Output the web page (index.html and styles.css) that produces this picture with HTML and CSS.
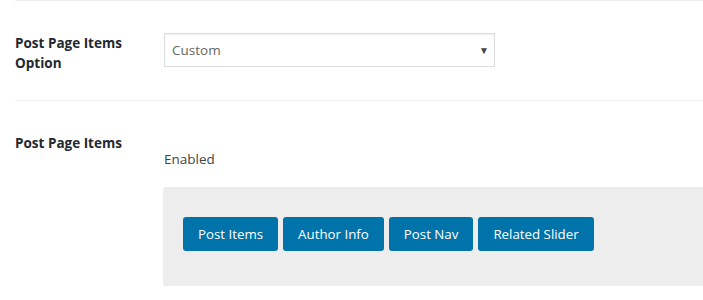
FILE: index.html
```html
<!DOCTYPE html>
<html lang="en">

<head>
    <meta charset="UTF-8">
    <title>Post Page Items</title>
    <link rel="stylesheet" href="styles.css">
</head>

<body>
    <div class="settings">
        <!-- Option select row -->
        <div class="setting-row">
            <div class="setting-label">Post Page Items Option</div>
            <div class="setting-field">
                <div class="select-box">
                    <span>Custom</span>
                    <span class="select-arrow">&#9660;</span>
                </div>
            </div>
        </div>

        <!-- Sortable items row -->
        <div class="setting-row items-row">
            <div class="setting-label">Post Page Items</div>
            <div class="setting-field">
                <p class="group-title">Enabled</p>
                <div class="items-box">
                    <span class="item-btn">Post Items</span>
                    <span class="item-btn">Author Info</span>
                    <span class="item-btn">Post Nav</span>
                    <span class="item-btn">Related Slider</span>
                </div>
            </div>
        </div>
    </div>
</body>

</html>
```

FILE: styles.css
```css
body {
    margin: 0;
    padding: 0;
    background-color: #fff;
    font-family: 'Open Sans', 'Noto Sans', sans-serif;
    font-size: 13.5px;
    color: #444;
    overflow: hidden;
}

.settings {
    margin-left: 15px;
}

.setting-row {
    display: flex;
    align-items: flex-start;
    border-top: 1px solid #eee;
    padding: 32px 0 27px;
}

.setting-label {
    width: 149px;
    font-weight: bold;
    line-height: 20px;
    color: #23282d;
}

.setting-field {
    flex: 1;
}

.select-box {
    width: 315px;
    height: 32px;
    padding: 0 7px;
    border: 1px solid #ddd;
    box-shadow: inset 0 1px 2px rgba(0, 0, 0, 0.07);
    display: flex;
    align-items: center;
    justify-content: space-between;
    color: #666;
}

.select-arrow {
    font-size: 10px;
    color: #444;
    margin-right: -2px;
    margin-top: -1px;
}

.group-title {
    margin: 16px 0 18px;
    line-height: 20px;
}

.items-box {
    margin-left: -1px;
    background-color: #ededed;
    border-radius: 3px 0 0 3px;
    padding: 30px 20px 35px;
    display: flex;
    gap: 5px;
}

.item-btn {
    background-color: #0073aa;
    color: #fff;
    font-size: 13.3px;
    border-radius: 3px;
    padding: 0 15px;
    line-height: 34px;
    height: 34px;
}
```
